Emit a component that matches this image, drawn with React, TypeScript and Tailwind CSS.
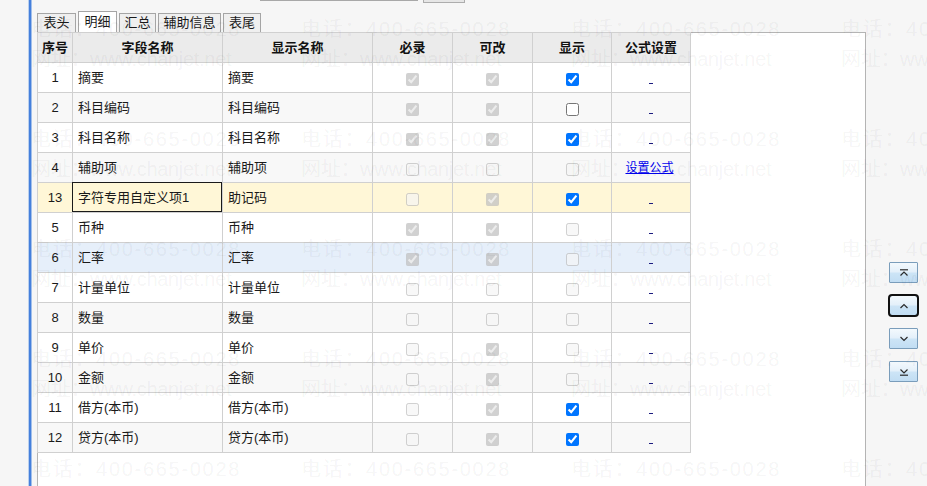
import React from 'react';

type CB = 'c' | 'u' | 'dc' | 'du';

interface Row {
  no: string;
  field: string;
  disp: string;
  req: CB;
  mod: CB;
  show: CB;
  link?: boolean;
  bg: string;
  selected?: boolean;
}

const W = 'bg-white';
const G = 'bg-[#f8f8f8]';

const rows: Row[] = [
  { no: '1', field: '摘要', disp: '摘要', req: 'dc', mod: 'dc', show: 'c', bg: W },
  { no: '2', field: '科目编码', disp: '科目编码', req: 'dc', mod: 'dc', show: 'u', bg: G },
  { no: '3', field: '科目名称', disp: '科目名称', req: 'dc', mod: 'dc', show: 'c', bg: W },
  { no: '4', field: '辅助项', disp: '辅助项', req: 'du', mod: 'du', show: 'du', link: true, bg: G },
  { no: '13', field: '字符专用自定义项1', disp: '助记码', req: 'du', mod: 'dc', show: 'c', bg: 'bg-[#fff7d7]', selected: true },
  { no: '5', field: '币种', disp: '币种', req: 'dc', mod: 'dc', show: 'du', bg: W },
  { no: '6', field: '汇率', disp: '汇率', req: 'dc', mod: 'dc', show: 'du', bg: 'bg-[#e6effa]' },
  { no: '7', field: '计量单位', disp: '计量单位', req: 'du', mod: 'du', show: 'du', bg: W },
  { no: '8', field: '数量', disp: '数量', req: 'du', mod: 'du', show: 'du', bg: G },
  { no: '9', field: '单价', disp: '单价', req: 'du', mod: 'dc', show: 'du', bg: W },
  { no: '10', field: '金额', disp: '金额', req: 'du', mod: 'dc', show: 'du', bg: G },
  { no: '11', field: '借方(本币)', disp: '借方(本币)', req: 'du', mod: 'dc', show: 'c', bg: W },
  { no: '12', field: '贷方(本币)', disp: '贷方(本币)', req: 'du', mod: 'dc', show: 'c', bg: G },
];

function Check({ s }: { s: CB }) {
  const cls = 'm-0 w-[13px] h-[13px]';
  if (s === 'c') return <input type="checkbox" defaultChecked className={cls} />;
  if (s === 'u') return <input type="checkbox" className={cls} />;
  if (s === 'dc') return <input type="checkbox" disabled defaultChecked className={cls} />;
  return <input type="checkbox" disabled className={cls} />;
}

const cell = 'h-[30px] border-r border-b border-[#d0d0d0] flex items-center';

const headers = ['序号', '字段名称', '显示名称', '必录', '可改', '显示', '公式设置'];

const tabs = [
  { t: '表头', w: 'w-[39px]', active: false },
  { t: '明细', w: 'w-[39px]', active: true },
  { t: '汇总', w: 'w-[37px]', active: false },
  { t: '辅助信息', w: 'w-[63px]', active: false },
  { t: '表尾', w: 'w-[38px]', active: false },
];

function Icon({ kind }: { kind: 'top' | 'up' | 'down' | 'bottom' }) {
  const p = { fill: 'none', stroke: '#2b2b2b', strokeWidth: 1.2 };
  if (kind === 'top')
    return (
      <svg width="10" height="8" viewBox="0 0 10 8">
        <line x1="1" y1="0.8" x2="9" y2="0.8" {...p} />
        <polyline points="1.5,6.5 5,3 8.5,6.5" {...p} />
      </svg>
    );
  if (kind === 'up')
    return (
      <svg width="10" height="6" viewBox="0 0 10 6">
        <polyline points="1.5,5 5,1.5 8.5,5" {...p} />
      </svg>
    );
  if (kind === 'down')
    return (
      <svg width="10" height="6" viewBox="0 0 10 6">
        <polyline points="1.5,1 5,4.5 8.5,1" {...p} />
      </svg>
    );
  return (
    <svg width="10" height="8" viewBox="0 0 10 8">
      <polyline points="1.5,1.5 5,5 8.5,1.5" {...p} />
      <line x1="1" y1="7.2" x2="9" y2="7.2" {...p} />
    </svg>
  );
}

const btnBase =
  'w-[29px] h-[21px] flex items-center justify-center bg-[linear-gradient(to_bottom,#f3f9fd_0%,#e4f0fa_45%,#cce4f6_55%,#c1ddf3_100%)]';

export default function App() {
  const wm = Array.from({ length: 20 });
  return (
    <div className="relative w-[927px] h-[486px] overflow-hidden bg-[#f6f6f6] flex font-['Liberation_Sans','Noto_Sans_CJK_SC',sans-serif] text-[13px] text-[#1a1a1a]">
      <div className="w-[28px] shrink-0" />
      <div className="flex shrink-0">
        <div className="w-px bg-[#b9cfee]" />
        <div className="w-[2px] bg-[#4580dc]" />
        <div className="w-px bg-[#a2bfea]" />
      </div>
      <div className="w-[5px] shrink-0" />

      <div className="w-[829px] shrink-0 flex flex-col">
        <div className="h-[11px] flex items-start">
          <div className="ml-[223px] w-[158px] h-px bg-[#a8a8a8]" />
          <div className="ml-[5px] w-[42px] h-[3px] bg-[#e6e6e6] border-x border-b border-[#adadad]" />
        </div>
        <div className="h-[21px] flex items-end gap-[2px]">
          {tabs.map((tb) => (
            <div
              key={tb.t}
              className={
                tb.active
                  ? `${tb.w} h-[21px] bg-white border border-b-0 border-[#a5a5a5] flex items-center justify-center`
                  : `${tb.w} h-[19px] bg-[#efefef] border border-b-0 border-[#a5a5a5] flex items-center justify-center`
              }
            >
              {tb.t}
            </div>
          ))}
        </div>
        <div className="flex-1 bg-white border-t border-l border-r border-[#b4b4b4]">
          <div className="-mt-px -ml-px w-fit grid grid-cols-[35px_150px_150px_80px_80px_79px_79px] border-l border-t border-[#d0d0d0]">
            {headers.map((h) => (
              <div key={h} className={`${cell} justify-center bg-[#ebebeb] font-bold text-[#111]`}>
                {h}
              </div>
            ))}
            {rows.map((r) => (
              <React.Fragment key={r.no}>
                <div className={`${cell} ${r.bg} justify-center`}>{r.no}</div>
                <div className={`${cell} ${r.bg} pl-[5px] relative`}>
                  {r.field}
                  {r.selected && (
                    <div className="absolute left-[-1px] top-[-1px] right-0 bottom-0 border border-[#1a1a1a]" />
                  )}
                </div>
                <div className={`${cell} ${r.bg} pl-[5px]`}>{r.disp}</div>
                <div className={`${cell} ${r.bg} justify-center pt-[3px]`}>
                  <Check s={r.req} />
                </div>
                <div className={`${cell} ${r.bg} justify-center pt-[3px]`}>
                  <Check s={r.mod} />
                </div>
                <div className={`${cell} ${r.bg} justify-center pt-[3px]`}>
                  <Check s={r.show} />
                </div>
                <div className={`${cell} ${r.bg} justify-center`}>
                  {r.link ? (
                    <a className="text-[12px] text-[#0000ee] underline cursor-pointer -ml-[3px]">设置公式</a>
                  ) : (
                    <span className="block w-[4px] h-px bg-[#1c1c80] mt-[12px]" />
                  )}
                </div>
              </React.Fragment>
            ))}
          </div>
        </div>
      </div>

      <div className="flex-1 flex flex-col pl-[23px] pt-[262px] gap-[12px]">
        <button className={`${btnBase} border border-[#7a9dbb] rounded-[1px]`}>
          <Icon kind="top" />
        </button>
        <button className={`${btnBase} border border-[#7a9dbb] rounded-[3px] outline-2 outline-offset-[-1px] outline-[#111]`}>
          <Icon kind="up" />
        </button>
        <button className={`${btnBase} border border-[#7a9dbb] rounded-[1px]`}>
          <Icon kind="down" />
        </button>
        <button className={`${btnBase} border border-[#7a9dbb] rounded-[1px]`}>
          <Icon kind="bottom" />
        </button>
      </div>

      <div className="absolute inset-0 pointer-events-none grid grid-cols-[repeat(4,270px)] auto-rows-[110px] pl-[31px] pt-[14px] text-[20px] leading-[30px] text-[rgba(0,0,0,0.055)] whitespace-nowrap">
        {wm.map((_, i) => (
          <div key={i} className="flex flex-col">
            <span className="tracking-[1.7px]">电话：400-665-0028</span>
            <span className="tracking-[-0.3px]">网址：www.chanjet.net</span>
          </div>
        ))}
      </div>
    </div>
  );
}
